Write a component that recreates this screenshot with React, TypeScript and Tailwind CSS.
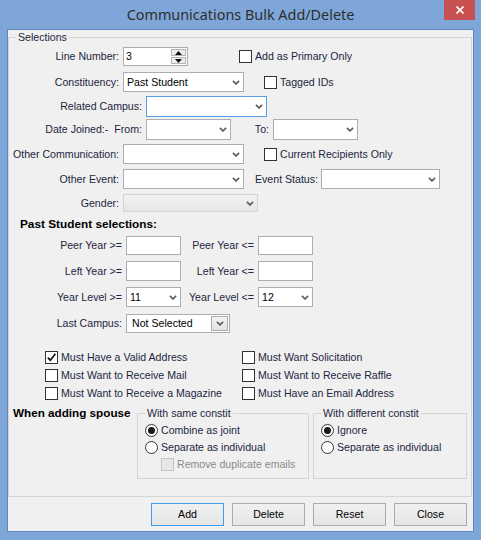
import clsx from "clsx";
import type { ReactNode } from "react";

const lbl = "text-[#1c2640]";

function Chevron() {
  return (
    <svg width="8" height="5" viewBox="0 0 8 5" className="shrink-0">
      <path d="M0.9 0.9 L4 3.9 L7.1 0.9" fill="none" stroke="#5e5e5e" strokeWidth="1.7" />
    </svg>
  );
}

function Combo({ className, value, focused, disabled }: { className: string; value?: string; focused?: boolean; disabled?: boolean }) {
  return (
    <div
      className={clsx(
        "flex shrink-0 items-center justify-between border pl-[3px] pr-[3px]",
        focused
          ? "border-[#569de5] bg-white"
          : disabled
            ? "border-[#d5d5d5] bg-linear-to-b from-[#f2f2f2] to-[#e6e6e6]"
            : "border-[#abadb3] bg-white",
        className,
      )}
    >
      <span className="text-black">{value}</span>
      <Chevron />
    </div>
  );
}

function TextBox({ className }: { className: string }) {
  return <div className={clsx("shrink-0 border border-[#abadb3] bg-white", className)} />;
}

function Lbl({ className, children }: { className: string; children: ReactNode }) {
  return <div className={clsx("shrink-0 whitespace-nowrap text-right", lbl, className)}>{children}</div>;
}

function CheckBox({ checked, disabled, className, children }: { checked?: boolean; disabled?: boolean; className?: string; children: ReactNode }) {
  return (
    <div className={clsx("flex items-center gap-[3px] whitespace-nowrap", className)}>
      <span
        className={clsx(
          "flex h-[13px] w-[13px] shrink-0 items-center justify-center border",
          disabled ? "border-[#c4c4c4] bg-[#e6e6e6]" : "border-[#333] bg-white",
        )}
      >
        {checked && (
          <svg width="11" height="11" viewBox="0 0 11 11">
            <path d="M1.8 5.6 L4.3 8.2 L9.4 1.8" fill="none" stroke="#111" strokeWidth="1.7" />
          </svg>
        )}
      </span>
      <span className={disabled ? "text-[#8a8a8a]" : lbl}>{children}</span>
    </div>
  );
}

function Radio({ checked, className, children }: { checked?: boolean; className?: string; children: ReactNode }) {
  return (
    <div className={clsx("flex items-center gap-[3px] whitespace-nowrap", className)}>
      <span className="flex h-[13px] w-[13px] shrink-0 items-center justify-center rounded-full border border-[#333] bg-white">
        {checked && <span className="h-[7px] w-[7px] rounded-full bg-[#1a1a1a]" />}
      </span>
      <span className={lbl}>{children}</span>
    </div>
  );
}

function Spin() {
  return (
    <div className="ml-[4px] flex h-[19px] w-[65px] shrink-0 border border-[#abadb3] bg-white">
      <span className="flex-1 pl-[2px] leading-[17px] text-black">3</span>
      <div className="my-px mr-px flex w-[15px] flex-col gap-px">
        <span className="flex flex-1 items-center justify-center border border-[#b5b5b5] bg-[#ededed]">
          <svg width="7" height="4" viewBox="0 0 7 4">
            <path d="M0 4 L3.5 0 L7 4Z" fill="#111" />
          </svg>
        </span>
        <span className="flex flex-1 items-center justify-center border border-[#b5b5b5] bg-[#ededed]">
          <svg width="7" height="4" viewBox="0 0 7 4">
            <path d="M0 0 L3.5 4 L7 0Z" fill="#111" />
          </svg>
        </span>
      </div>
    </div>
  );
}

function Btn({ children, primary }: { children: ReactNode; primary?: boolean }) {
  return (
    <button
      className={clsx(
        "h-[23px] w-[73px] border bg-linear-to-b from-[#f0f0f0] to-[#e5e5e5] text-black",
        primary ? "border-[#3d9bf0]" : "border-[#acacac]",
      )}
    >
      {children}
    </button>
  );
}

export default function App() {
  return (
    <div className="h-[540px] w-[481px] bg-[#7fa6d8] px-[7px] font-['Liberation_Sans',Arial,sans-serif] text-[10.6px] leading-[13px]">
      <div className="relative flex h-[29px] items-center justify-center">
        <span className="-mt-[1px] font-['Noto_Sans',sans-serif] text-[14.4px] text-[#2e2e2e]">Communications Bulk Add/Delete</span>
        <div className="absolute -right-[1px] top-0 flex h-[20px] w-[31px] items-center justify-center bg-[#c75050]">
          <svg width="8" height="8" viewBox="0 0 8 8">
            <path d="M0.5 0.5 L7.5 7.5 M7.5 0.5 L0.5 7.5" stroke="#fff" strokeWidth="1.6" />
          </svg>
        </div>
      </div>

      <div className="h-[503px] border border-[#5f86bd] bg-[#f0f0f0]">
        <fieldset className="h-[467px] w-[464px] border border-[#d5d5d5]">
          <legend className={clsx("ml-[7px] px-[2px] leading-[14px]", lbl)}>Selections</legend>

          <div className="mt-[3px] flex h-[19px] items-center">
            <Lbl className="w-[110px]">Line Number:</Lbl>
            <Spin />
            <CheckBox className="ml-[51px]">Add as Primary Only</CheckBox>
          </div>

          <div className="mt-[6px] flex h-[20px] items-stretch">
            <Lbl className="w-[110px] self-center">Constituency:</Lbl>
            <Combo className="ml-[4px] w-[121px]" value="Past Student" />
            <CheckBox className="ml-[20px]">Tagged IDs</CheckBox>
          </div>

          <div className="mt-[4px] flex h-[21px] items-stretch">
            <Lbl className="w-[133px] self-center">Related Campus:</Lbl>
            <Combo className="ml-[4px] w-[121px]" focused />
          </div>

          <div className="mt-[2px] flex h-[21px] items-stretch">
            <Lbl className="w-[133px] self-center">
              Date Joined:-<span className="ml-[6px]">From:</span>
            </Lbl>
            <Combo className="ml-[4px] w-[85px]" />
            <Lbl className="w-[38px] self-center">To:</Lbl>
            <Combo className="ml-[4px] w-[85px]" />
          </div>

          <div className="mt-[4px] flex h-[20px] items-stretch">
            <Lbl className="w-[110px] self-center">Other Communication:</Lbl>
            <Combo className="ml-[4px] w-[121px]" />
            <CheckBox className="ml-[20px]">Current Recipients Only</CheckBox>
          </div>

          <div className="mt-[5px] flex h-[20px] items-stretch">
            <Lbl className="w-[110px] self-center">Other Event:</Lbl>
            <Combo className="ml-[4px] w-[121px]" />
            <Lbl className="w-[74px] self-center">Event Status:</Lbl>
            <Combo className="ml-[3px] w-[119px]" />
          </div>

          <div className="mt-[5px] flex h-[18px] items-stretch">
            <Lbl className="w-[110px] self-center">Gender:</Lbl>
            <Combo className="ml-[4px] w-[135px]" disabled />
          </div>

          <div className="ml-[11px] mt-[6px] text-[11.8px] font-bold text-black">Past Student selections:</div>

          <div className="mt-[5px] flex h-[19px] items-stretch">
            <Lbl className="w-[113px] self-center">Peer Year &gt;=</Lbl>
            <TextBox className="ml-[4px] w-[55px]" />
            <Lbl className="w-[73px] self-center">Peer Year &lt;=</Lbl>
            <TextBox className="ml-[4px] w-[55px]" />
          </div>

          <div className="mt-[6px] flex h-[20px] items-stretch">
            <Lbl className="w-[113px] self-center">Left Year &gt;=</Lbl>
            <TextBox className="ml-[4px] w-[55px]" />
            <Lbl className="w-[73px] self-center">Left Year &lt;=</Lbl>
            <TextBox className="ml-[4px] w-[55px]" />
          </div>

          <div className="mt-[6px] flex h-[20px] items-stretch">
            <Lbl className="w-[113px] self-center">Year Level &gt;=</Lbl>
            <Combo className="ml-[4px] w-[55px]" value="11" />
            <Lbl className="w-[73px] self-center">Year Level &lt;=</Lbl>
            <Combo className="ml-[4px] w-[55px]" value="12" />
          </div>

          <div className="mt-[7px] flex h-[19px] items-stretch">
            <Lbl className="w-[113px] self-center">Last Campus:</Lbl>
            <div className="ml-[4px] flex w-[104px] items-stretch border border-[#abadb3] bg-white">
              <span className="flex-1 pl-[5px] leading-[17px] text-black">Not Selected</span>
              <span className="my-px mr-px flex w-[17px] items-center justify-center border border-[#acacac] bg-linear-to-b from-[#f2f2f2] to-[#e3e3e3]">
                <Chevron />
              </span>
            </div>
          </div>

          <div className="mt-[15px] pl-[36px]">
            <div className="flex h-[18px] items-center">
              <CheckBox className="w-[197px]" checked>
                Must Have a Valid Address
              </CheckBox>
              <CheckBox>Must Want Solicitation</CheckBox>
            </div>
            <div className="flex h-[18px] items-center">
              <CheckBox className="w-[197px]">Must Want to Receive Mail</CheckBox>
              <CheckBox>Must Want to Receive Raffle</CheckBox>
            </div>
            <div className="flex h-[18px] items-center">
              <CheckBox className="w-[197px]">Must Want to Receive a Magazine</CheckBox>
              <CheckBox>Must Have an Email Address</CheckBox>
            </div>
          </div>

          <div className="mt-[4px] flex">
            <div className="w-[128px] pl-[4px] text-[11.7px] font-bold leading-[14px] text-black">When adding spouse</div>
            <fieldset className="h-[73px] w-[172px] border border-[#d5d5d5] pl-[7px]">
              <legend className={clsx("px-[2px] leading-[14px]", lbl)}>With same constit</legend>
              <Radio className="mt-[2px] h-[17px]" checked>
                Combine as joint
              </Radio>
              <Radio className="h-[17px]">Separate as individual</Radio>
              <CheckBox className="h-[17px] pl-[16px]" disabled>
                Remove duplicate emails
              </CheckBox>
            </fieldset>
            <fieldset className="ml-[4px] h-[73px] w-[154px] border border-[#d5d5d5] pl-[7px]">
              <legend className={clsx("px-[2px] leading-[14px]", lbl)}>With different constit</legend>
              <Radio className="mt-[2px] h-[17px]" checked>
                Ignore
              </Radio>
              <Radio className="h-[17px]">Separate as individual</Radio>
            </fieldset>
          </div>
        </fieldset>

        <div className="mt-[6px] flex justify-end gap-[8px] pr-[6px]">
          <Btn primary>Add</Btn>
          <Btn>Delete</Btn>
          <Btn>Reset</Btn>
          <Btn>Close</Btn>
        </div>
      </div>
    </div>
  );
}
